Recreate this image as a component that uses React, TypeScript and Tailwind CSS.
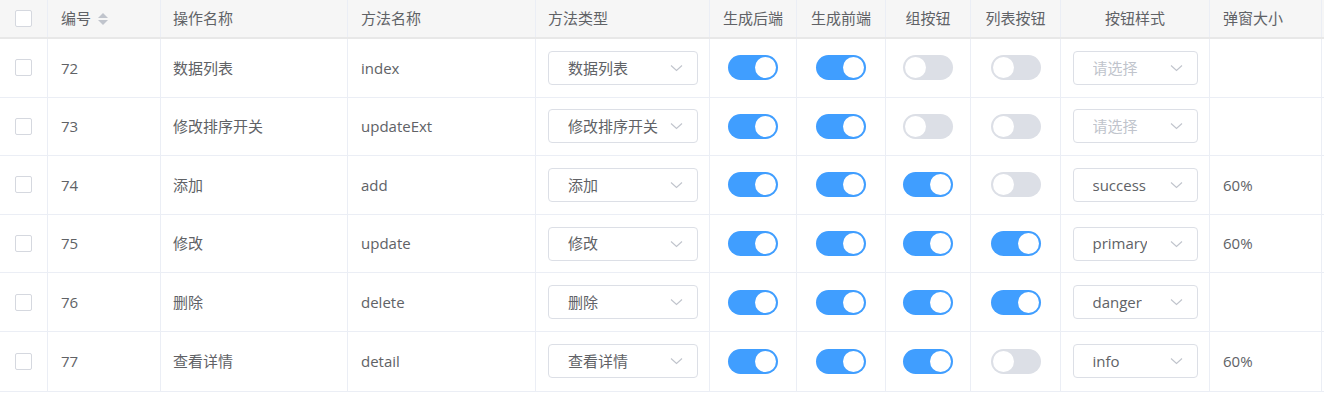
import React from 'react';

const COLS = 'grid-cols-[48px_113px_187px_188px_174px_87px_89px_85px_90px_149px_112px]';

type Row = {
  id: number;
  name: string;
  method: string;
  type: string;
  backend: boolean;
  frontend: boolean;
  group: boolean;
  list: boolean;
  style: string;
  size: string;
};

const ROWS: Row[] = [
  { id: 72, name: '数据列表', method: 'index', type: '数据列表', backend: true, frontend: true, group: false, list: false, style: '', size: '' },
  { id: 73, name: '修改排序开关', method: 'updateExt', type: '修改排序开关', backend: true, frontend: true, group: false, list: false, style: '', size: '' },
  { id: 74, name: '添加', method: 'add', type: '添加', backend: true, frontend: true, group: true, list: false, style: 'success', size: '60%' },
  { id: 75, name: '修改', method: 'update', type: '修改', backend: true, frontend: true, group: true, list: true, style: 'primary', size: '60%' },
  { id: 76, name: '删除', method: 'delete', type: '删除', backend: true, frontend: true, group: true, list: true, style: 'danger', size: '' },
  { id: 77, name: '查看详情', method: 'detail', type: '查看详情', backend: true, frontend: true, group: true, list: false, style: 'info', size: '60%' },
];

function Checkbox() {
  return <div className="w-[17px] h-[17px] rounded-[2px] border border-[#d5d8df] bg-white" />;
}

function Switch({ on }: { on: boolean }) {
  return (
    <div
      className={`relative w-[50px] h-[25px] rounded-full ${on ? 'bg-[#409eff]' : 'bg-[#dcdfe6]'}`}
    >
      <div
        className={`absolute top-[2px] w-[21px] h-[21px] rounded-full bg-white ${on ? 'left-[27px]' : 'left-[2px]'}`}
      />
    </div>
  );
}

function Chevron() {
  return (
    <svg width="13" height="8" viewBox="0 0 13 8" fill="none" className="shrink-0">
      <path d="M1 1.5 L6.5 6.5 L12 1.5" stroke="#c0c4cc" strokeWidth="1.1" />
    </svg>
  );
}

function Select({ value, placeholder, width }: { value: string; placeholder: string; width: string }) {
  return (
    <div
      className={`${width} h-[34px] flex items-center justify-between pl-[19px] pr-[14px] border border-[#dcdfe6] rounded-[4px] bg-white`}
    >
      <span className={`truncate ${value ? 'text-[#606266]' : 'text-[#c0c4cc]'}`}>{value || placeholder}</span>
      <Chevron />
    </div>
  );
}

function SortCaret() {
  return (
    <svg width="12" height="16" viewBox="0 0 12 16" className="ml-[6px]">
      <path d="M6 2 L11 7 L1 7 Z" fill="#c0c4cc" />
      <path d="M1 9 L11 9 L6 14 Z" fill="#c0c4cc" />
    </svg>
  );
}

export default function App() {
  const cell = 'border-r border-[#ebeef5] flex items-center';
  return (
    <div
      className="w-[1324px] h-[397px] bg-white text-[15px] text-[#606266] overflow-hidden"
      style={{ fontFamily: '"Open Sans", "Noto Sans CJK SC", sans-serif' }}
    >
      {/* header */}
      <div className={`grid ${COLS} h-[39px] bg-[#f6f6f6] border-b-2 border-[#e8e8e8]`}>
        <div className={`${cell} justify-center`}>
          <Checkbox />
        </div>
        <div className={`${cell} pl-[13px]`}>
          编号
          <SortCaret />
        </div>
        <div className={`${cell} pl-[12px]`}>操作名称</div>
        <div className={`${cell} pl-[13px]`}>方法名称</div>
        <div className={`${cell} pl-[12px]`}>方法类型</div>
        <div className={`${cell} justify-center`}>生成后端</div>
        <div className={`${cell} justify-center`}>生成前端</div>
        <div className={`${cell} justify-center`}>组按钮</div>
        <div className={`${cell} justify-center`}>列表按钮</div>
        <div className={`${cell} justify-center`}>按钮样式</div>
        <div className={`${cell} pl-[13px]`}>弹窗大小</div>
      </div>

      {/* body */}
      {ROWS.map((r, i) => (
        <div
          key={r.id}
          className={`grid ${COLS} ${i === ROWS.length - 1 ? 'h-[60px]' : 'h-[58.6px]'} border-b border-[#ebeef5]`}
        >
          <div className={`${cell} justify-center`}>
            <Checkbox />
          </div>
          <div className={`${cell} pl-[13px]`}>{r.id}</div>
          <div className={`${cell} pl-[12px]`}>{r.name}</div>
          <div className={`${cell} pl-[13px]`}>{r.method}</div>
          <div className={`${cell} pl-[12px]`}>
            <Select value={r.type} placeholder="请选择" width="w-[150px]" />
          </div>
          <div className={`${cell} justify-center`}>
            <Switch on={r.backend} />
          </div>
          <div className={`${cell} justify-center`}>
            <Switch on={r.frontend} />
          </div>
          <div className={`${cell} justify-center`}>
            <Switch on={r.group} />
          </div>
          <div className={`${cell} justify-center`}>
            <Switch on={r.list} />
          </div>
          <div className={`${cell} justify-center`}>
            <Select value={r.style} placeholder="请选择" width="w-[125px]" />
          </div>
          <div className={`${cell} pl-[13px]`}>{r.size}</div>
        </div>
      ))}
    </div>
  );
}
